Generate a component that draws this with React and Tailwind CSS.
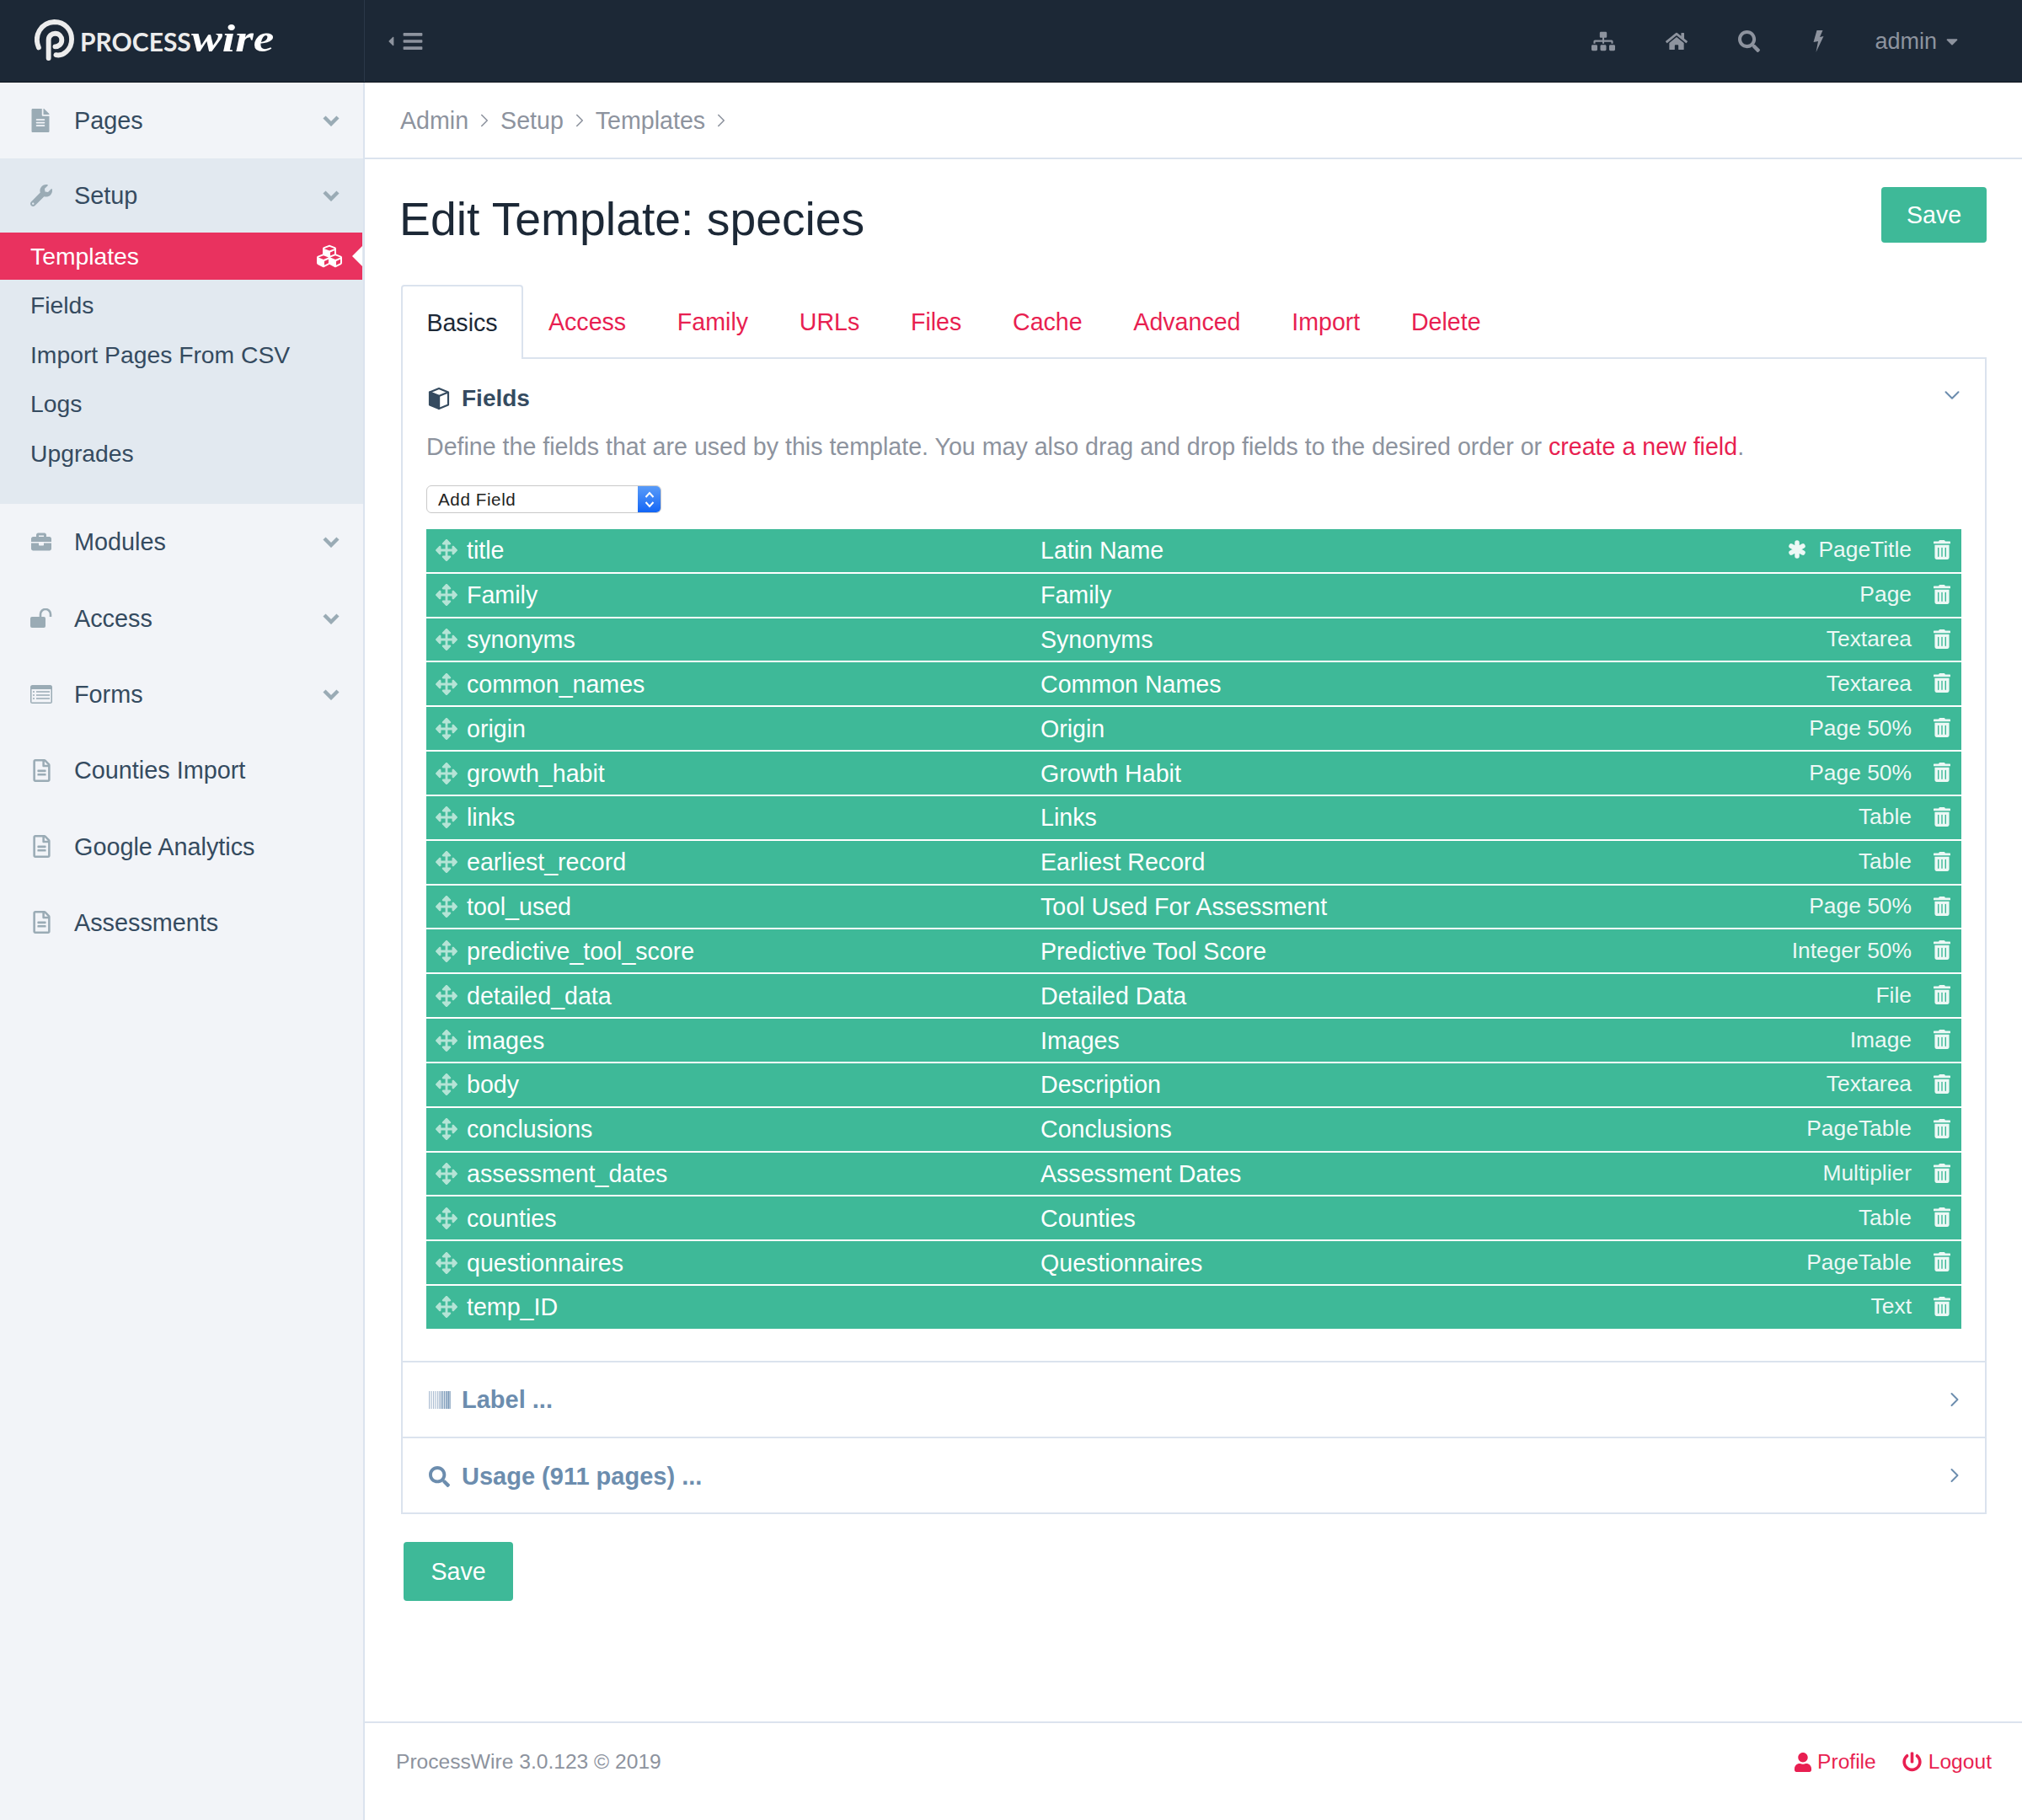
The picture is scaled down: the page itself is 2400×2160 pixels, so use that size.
import {
  FaFileAlt, FaRegFileAlt, FaWrench, FaCubes, FaBriefcase,
  FaSitemap, FaHome, FaSearch, FaBars, FaCaretLeft, FaCaretDown,
  FaArrowsAlt, FaTrashAlt, FaUser, FaPowerOff,
} from 'react-icons/fa'
import { ChevronDown, ChevronRight } from 'lucide-react'

const fields = [
  ['title', 'Latin Name', 'PageTitle', true],
  ['Family', 'Family', 'Page'],
  ['synonyms', 'Synonyms', 'Textarea'],
  ['common_names', 'Common Names', 'Textarea'],
  ['origin', 'Origin', 'Page 50%'],
  ['growth_habit', 'Growth Habit', 'Page 50%'],
  ['links', 'Links', 'Table'],
  ['earliest_record', 'Earliest Record', 'Table'],
  ['tool_used', 'Tool Used For Assessment', 'Page 50%'],
  ['predictive_tool_score', 'Predictive Tool Score', 'Integer 50%'],
  ['detailed_data', 'Detailed Data', 'File'],
  ['images', 'Images', 'Image'],
  ['body', 'Description', 'Textarea'],
  ['conclusions', 'Conclusions', 'PageTable'],
  ['assessment_dates', 'Assessment Dates', 'Multiplier'],
  ['counties', 'Counties', 'Table'],
  ['questionnaires', 'Questionnaires', 'PageTable'],
  ['temp_ID', '', 'Text'],
]

const tabs = ['Access', 'Family', 'URLs', 'Files', 'Cache', 'Advanced', 'Import', 'Delete']

function NavChevron() {
  return (
    <svg viewBox="0 0 20 14" className="w-[20px] h-[14px]" fill="none" stroke="#9aabb5" strokeWidth="4.4">
      <path d="M2 3l8 8 8-8" />
    </svg>
  )
}

function NavRow({ icon, label, chevron, short }) {
  return (
    <div className={short ? 'flex items-center h-[88px] pl-[36px] pr-[28px] text-[#354b60] text-[28.8px]' : 'flex items-center h-[90.3px] pl-[36px] pr-[28px] text-[#354b60] text-[28.8px]'}>
      <span className="w-[52px] flex text-[#9aabb5]">{icon}</span>
      <span className="flex-1">{label}</span>
      {chevron && <NavChevron />}
    </div>
  )
}

function Crumb({ label }) {
  return (
    <>
      <span>{label}</span>
      <ChevronRight className="w-[26px] h-[26px] mx-[6px]" strokeWidth={1.5} />
    </>
  )
}

function AsteriskIcon() {
  return (
    <svg viewBox="0 0 22 22" className="w-[22px] h-[22px] mr-[14px] -mt-[2px]" fill="none" stroke="#ecf8f5" strokeWidth="5.5" strokeLinecap="round">
      <path d="M11 3v16M4 7l14 8M18 7L4 15" />
    </svg>
  )
}

function FieldRow({ name, label, type, req }) {
  return (
    <div className="flex items-center h-[50.83px] mb-[2px] bg-[#3eb998] text-white">
      <FaArrowsAlt className="ml-[11px] w-[26px] h-[26px] text-[#b4e4d6]" />
      <span className="ml-[11px] w-[681px]">{name}</span>
      <span className="flex-1">{label}</span>
      {req && <AsteriskIcon />}
      <span className="text-[#ecf8f5] text-[26.4px] -mt-[2px]">{type}</span>
      <FaTrashAlt className="ml-[26px] mr-[13px] -mt-[2px] w-[20px] h-[23px] text-[#ecf8f5]" />
    </div>
  )
}

function BoltIcon() {
  return (
    <svg viewBox="0 0 12 26" className="w-[13px] h-[26px]" fill="currentColor">
      <path d="M4 0h7L7.5 8 12 7 3 26l2.5-13L0 14z" />
    </svg>
  )
}

function CubeIcon() {
  return (
    <svg viewBox="0 0 26 28" className="w-[26px] h-[28px] ml-[2px] mr-[14px]" strokeLinejoin="round">
      <path d="M13 2 24 6.5 13 11 2 6.5z" fill="none" stroke="#354b60" strokeWidth="2.2" />
      <path d="M24 6.5V21.5L13 26V11" fill="none" stroke="#354b60" strokeWidth="2.2" />
      <path d="M2 6.5 13 11v15L2 21.5z" fill="#354b60" stroke="#354b60" strokeWidth="2.2" />
    </svg>
  )
}

function UnlockIcon() {
  return (
    <svg viewBox="0 0 26 23" className="w-[26px] h-[23px]">
      <rect x="0" y="10" width="18" height="13" rx="2" fill="currentColor" />
      <path d="M12 11V7a6 6 0 0 1 12 0v3" fill="none" stroke="currentColor" strokeWidth="2.6" />
    </svg>
  )
}

function ListIcon() {
  return (
    <svg viewBox="0 0 26 22" className="w-[26px] h-[22px]">
      <rect width="26" height="22" rx="2.5" fill="currentColor" />
      <rect x="1.5" y="5" width="23" height="15.5" fill="#f2f4f8" />
      <path d="M3 8h2M7 8h16M3 12h2M7 12h16M3 16h2M7 16h16" stroke="currentColor" strokeWidth="1.6" />
    </svg>
  )
}

function BarcodeIcon() {
  const bars = [0, 2.5, 5, 7.5, 10, 12, 14, 16, 18, 20, 21.5, 23, 24.5]
  return (
    <svg viewBox="0 0 27 21" className="w-[27px] h-[21px] ml-[3px]">
      {bars.map((x, i) => (
        <rect key={x} x={x} width="1.2" height="21" fill={i < 6 ? '#aebfd3' : '#7f9dbb'} />
      ))}
    </svg>
  )
}

function Logo() {
  return (
    <div className="flex items-center pl-[41px]">
      <svg viewBox="0 0 48 52" className="w-[47px] h-[51px]" fill="none" stroke="#ececec" strokeWidth="6" strokeLinecap="round">
        <path d="M5 34C-1 20 7 4 24 3c13 0 21 10 21 21 0 13-11 21-19 19" />
        <path d="M17 47V25c0-5 4-8 8-8 5 0 8 4 8 8 0 5-4 8-8 8" />
      </svg>
      <span className="ml-[7px] text-[30px] text-[#ececec] font-['Lato',sans-serif] font-bold">PROCESS</span>
      <span className="inline-block origin-left scale-x-[1.2] text-[46px] leading-[44px] -mt-[6px] text-white italic font-bold font-['Liberation_Serif',serif]">wire</span>
    </div>
  )
}

function SubSection({ icon, label, nudge }) {
  return (
    <div className="flex items-center justify-between h-[90px] border-t-2 border-[#dbe3ee] pl-[28px] pr-[24px] text-[#6c8dae] text-[29px] font-bold">
      <div className={nudge ? 'flex items-center mt-[2px]' : 'flex items-center'}>
        <span className="w-[42px] flex">{icon}</span>
        <span>{label}</span>
      </div>
      <ChevronRight className="w-[28px] h-[28px] -mr-[2px]" strokeWidth={1.7} />
    </div>
  )
}

export default function App() {
  return (
    <div className="min-h-[2160px] flex flex-col bg-white text-[28.6px] leading-[40px] font-['Liberation_Sans',Arial,sans-serif]">
      {/* top bar */}
      <div className="h-[98px] flex items-center bg-[#1c2836] border-b border-[#0d141c] text-[#8d939e]">
        <div className="w-[433px] h-full flex items-center border-r border-[#2b3848]">
          <Logo />
        </div>
        <div className="flex items-center ml-[25px] flex-1">
          <FaCaretLeft className="w-[12px] h-[18px]" />
          <FaBars className="ml-[7px] w-[26px] h-[26px]" />
        </div>
        <div className="flex items-center pr-[72px] text-[27px]">
          <FaSitemap className="w-[28px] h-[26px]" />
          <FaHome className="ml-[60px] w-[26px] h-[24px]" />
          <FaSearch className="ml-[60px] w-[26px] h-[26px]" />
          <span className="ml-[63px] flex"><BoltIcon /></span>
          <span className="ml-[60px]">admin</span>
          <FaCaretDown className="ml-[7px] w-[22px] h-[22px]" />
        </div>
      </div>

      <div className="flex flex-1">
        {/* sidebar */}
        <div className="w-[433px] shrink-0 bg-[#f2f4f8] border-r-2 border-[#dbe3ee]">
          <NavRow icon={<FaFileAlt className="w-[24px] h-[28px]" />} label="Pages" chevron />
          <div className="bg-[#e2e9f0] h-[410px]">
            <NavRow icon={<FaWrench className="w-[26px] h-[26px]" />} label="Setup" chevron short />
            <div className="flex items-center justify-between h-[56px] bg-[#e9325f] text-white text-[28.3px] pl-[36px] pr-[22px] relative mr-[1px]">
              <span>Templates</span>
              <FaCubes className="w-[34px] h-[30px]" />
              <span className="absolute right-0 top-[16px] border-y-[12px] border-y-transparent border-r-[12px] border-r-white"></span>
            </div>
            <div className="pl-[36px] text-[#354b60] text-[28.3px] pt-[1px]">
              <div className="h-[58.4px] flex items-center">Fields</div>
              <div className="h-[58.4px] flex items-center">Import Pages From CSV</div>
              <div className="h-[58.4px] flex items-center">Logs</div>
              <div className="h-[58.4px] flex items-center">Upgrades</div>
            </div>
          </div>
          <NavRow icon={<FaBriefcase className="w-[26px] h-[24px]" />} label="Modules" chevron />
          <NavRow icon={<UnlockIcon />} label="Access" chevron />
          <NavRow icon={<ListIcon />} label="Forms" chevron />
          <NavRow icon={<FaRegFileAlt className="w-[23px] h-[27px] ml-[2px]" />} label="Counties Import" />
          <NavRow icon={<FaRegFileAlt className="w-[23px] h-[27px] ml-[2px]" />} label="Google Analytics" />
          <NavRow icon={<FaRegFileAlt className="w-[23px] h-[27px] ml-[2px]" />} label="Assessments" />
        </div>

        {/* main */}
        <div className="flex-1 flex flex-col min-w-0">
          <div className="h-[91px] flex items-center pl-[42px] border-b-2 border-[#dbe3ee] text-[#8d939e]">
            <Crumb label="Admin" />
            <Crumb label="Setup" />
            <Crumb label="Templates" />
          </div>

          <div className="pl-[43px] pr-[42px] pt-[33px]">
            <div className="flex justify-between">
              <h1 className="text-[55.3px] leading-[76px] -ml-[2px] text-[#1c2836]">Edit Template: species</h1>
              <button className="w-[125px] h-[66px] bg-[#3eb998] text-white rounded-[4px]">Save</button>
            </div>

            <div className="flex mt-[40px] h-[88px] relative">
              <div className="w-[145px] h-[88px] flex items-center justify-center bg-white border-2 border-b-0 border-[#dbe3ee] rounded-t-[4px] text-[#1c2836] z-10">Basics</div>
              <div className="flex-1 flex items-center border-b-2 border-[#dbe3ee] text-[#e81f51] text-[28.6px] pl-[30px] pt-[2px] gap-[60.7px]">
                {tabs.map((t) => <span key={t}>{t}</span>)}
              </div>
            </div>

            <div className="border-2 border-t-0 border-[#dbe3ee]">
              <div className="h-[1189px] pl-[28px] pr-[28px] pt-[27px]">
                <div className="flex items-center justify-between h-[40px] text-[#354b60] font-bold">
                  <div className="flex items-center">
                    <CubeIcon />
                    <span className="text-[28px]">Fields</span>
                  </div>
                  <ChevronDown className="w-[30px] h-[30px] text-[#6c8dae] -mr-[4px] -mt-[8px]" strokeWidth={1.6} />
                </div>
                <p className="mt-[17px] text-[#8d939e]">
                  Define the fields that are used by this template. You may also drag and drop fields to the desired order or <span className="text-[#e81f51]">create a new field</span>.
                </p>
                <div className="mt-[26px] flex w-[279px] h-[33px] rounded-[6px] border border-[#c9c9c9] bg-white overflow-hidden">
                  <span className="flex-1 pl-[13px] text-[20.6px] leading-[31px] text-[#222] tracking-[0.6px]">Add Field</span>
                  <span className="w-[27px] -my-[1px] bg-gradient-to-b from-[#5a9cf8] to-[#0d63f5] flex items-center justify-center">
                    <svg viewBox="0 0 12 22" className="w-[12px] h-[22px]" fill="none" stroke="white" strokeWidth="2">
                      <path d="M1.5 8 6 3l4.5 5M1.5 14 6 19l4.5-5" />
                    </svg>
                  </span>
                </div>
                <div className="mt-[19px]">
                  {fields.map((f) => (
                    <FieldRow key={f[0]} name={f[0]} label={f[1]} type={f[2]} req={f[3]} />
                  ))}
                </div>
              </div>
              <SubSection icon={<BarcodeIcon />} label="Label ..." />
              <SubSection icon={<FaSearch className="w-[25px] h-[25px] ml-[3px]" />} label="Usage (911 pages) ..." nudge />
            </div>

            <button className="mt-[33px] ml-[3px] w-[130px] h-[70px] bg-[#3eb998] text-white rounded-[4px]">Save</button>
          </div>

          <div className="mt-auto h-[117px] flex items-start justify-between border-t-2 border-[#dbe3ee] pt-[26px] pl-[37px] pr-[36px] text-[#8d939e] text-[24.6px]">
            <span>ProcessWire 3.0.123 © 2019</span>
            <div className="flex items-center h-[40px] text-[#e81f51]">
              <FaUser className="w-[20px] h-[23px] mr-[7px]" />
              <span>Profile</span>
              <FaPowerOff className="ml-[31px] mr-[8px] w-[23px] h-[24px]" />
              <span>Logout</span>
            </div>
          </div>
        </div>
      </div>
    </div>
  )
}
